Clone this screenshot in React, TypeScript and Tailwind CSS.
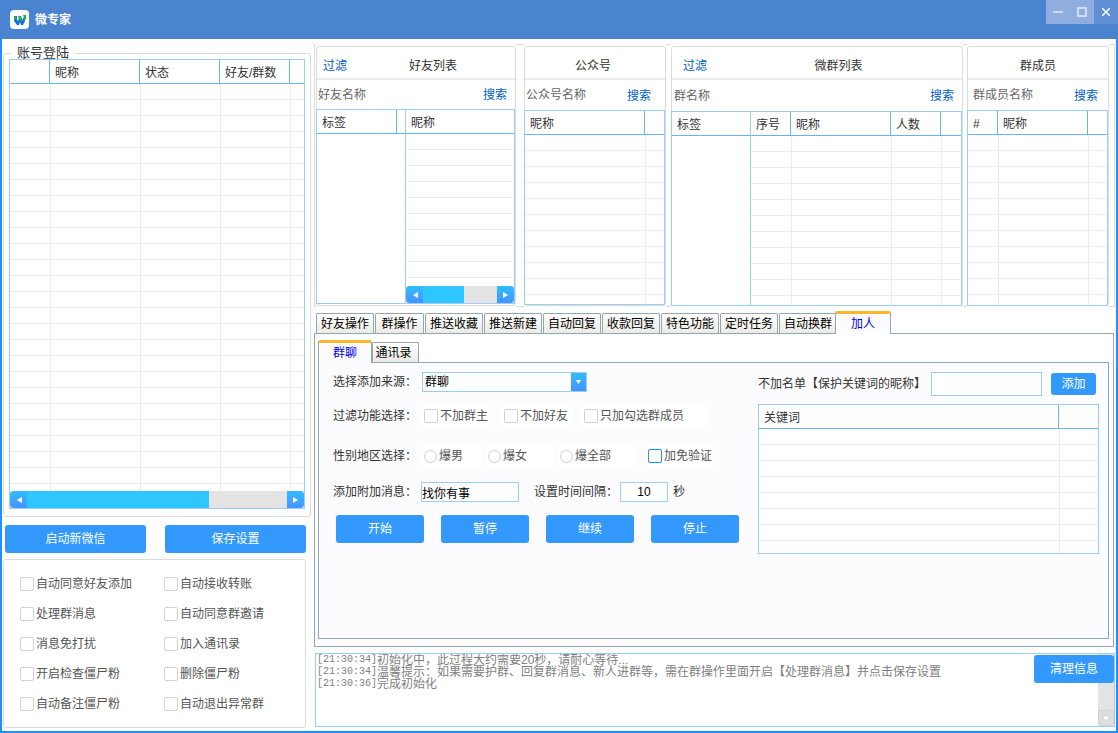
import { useState } from 'react';
import type { ReactNode } from 'react';

interface Column {
  label: string;
  // Tailwind width class; left empty for the column that takes the rest
  width?: string;
}

interface GridTableProps {
  columns: Column[];
  rows?: number;
  // Height class of the last, partly shown row
  tail: string;
  lines?: boolean;
}

const ACCOUNT_COLUMNS: Column[] = [
  { label: '', width: 'w-[40px]' },
  { label: '昵称' },
  { label: '状态', width: 'w-[80px]' },
  { label: '好友/群数', width: 'w-[70px]' },
  { label: '', width: 'w-[14px]' },
];

const SETTINGS = [
  '自动同意好友添加', '自动接收转账',
  '处理群消息', '自动同意群邀请',
  '消息免打扰', '加入通讯录',
  '开启检查僵尸粉', '删除僵尸粉',
  '自动备注僵尸粉', '自动退出异常群',
];

const TABS = ['好友操作', '群操作', '推送收藏', '推送新建', '自动回复', '收款回复', '特色功能', '定时任务', '自动换群', '加人'];

const ACTIONS = ['开始', '暂停', '继续', '停止'];

const LOG = [
  { time: '[21:30:34]', text: '初始化中，此过程大约需要20秒，请耐心等待...' },
  { time: '[21:30:34]', text: '温馨提示：如果需要护群、回复群消息、新人进群等，需在群操作里面开启【处理群消息】并点击保存设置' },
  { time: '[21:30:36]', text: '完成初始化' },
];

function GridTable({ columns, rows = 0, tail, lines = true }: GridTableProps) {
  const cell = lines ? 'border-[#ececec]' : 'border-transparent';
  return (
    <table className="w-full table-fixed border-separate border-spacing-0 bg-white">
      <thead>
        <tr className="h-6">
          {columns.map((c, i) => (
            <th
              key={i}
              className={`h-6 overflow-hidden border-b border-[#66b5ee] p-0 pt-0.5 text-left font-normal whitespace-nowrap text-[#333] ${c.width ?? ''} ${c.label ? 'pl-[5px]' : ''} ${i < columns.length - 1 ? 'border-r' : ''}`}
            >
              {c.label}
            </th>
          ))}
        </tr>
      </thead>
      <tbody>
        {Array.from({ length: rows }, (_, r) => (
          <tr key={r}>
            {columns.map((_, i) => (
              <td key={i} className={`h-4 border-b p-0 ${cell} ${i > 0 ? 'border-l' : ''}`} />
            ))}
          </tr>
        ))}
        <tr>
          {columns.map((_, i) => (
            <td key={i} className={`p-0 ${tail} ${cell} ${i > 0 ? 'border-l' : ''}`} />
          ))}
        </tr>
      </tbody>
    </table>
  );
}

function ScrollBar({ thumb }: { thumb: string }) {
  const end = 'flex h-[17px] w-[17px] shrink-0 items-center justify-center bg-linear-to-b from-[#2ebcff] to-[#4494ff]';
  return (
    <div className="flex h-[17px] bg-[#e3e3e3]">
      <button aria-label="向左" className={`${end} rounded-l-[4px]`}>
        <svg width="6" height="8" viewBox="0 0 6 8"><path d="M6 1v6L1 4z" fill="#fff" /></svg>
      </button>
      <div className="flex-1">
        <div className={`h-full bg-[#2fc5ff] ${thumb}`} />
      </div>
      <button aria-label="向右" className={`${end} rounded-r-[4px]`}>
        <svg width="6" height="8" viewBox="0 0 6 8"><path d="M0 1v6l5-3z" fill="#fff" /></svg>
      </button>
    </div>
  );
}

function Check({ label, active }: { label: string; active?: boolean }) {
  return (
    <label className="flex items-center gap-0.5 whitespace-nowrap text-[#555]">
      <input
        type="checkbox"
        className={`h-3.5 w-3.5 shrink-0 appearance-none rounded-[2px] border bg-white checked:bg-[#3399ff] ${active ? 'border-[#1e90ff]' : 'border-[#d2d2d2]'}`}
      />
      {label}
    </label>
  );
}

function Radio({ label }: { label: string }) {
  return (
    <label className="flex items-center gap-0.5 whitespace-nowrap text-[#555]">
      <input
        type="radio"
        name="gender"
        className="h-[13px] w-[13px] shrink-0 appearance-none rounded-full border border-[#d2d2d2] bg-white checked:bg-[#3399ff]"
      />
      {label}
    </label>
  );
}

interface PanelProps {
  title: string;
  search: string;
  filter?: string;
  // Classes for the panel, the title, the search row
  className: string;
  titleClass?: string;
  searchClass: string;
  children: ReactNode;
}

function Panel({ title, search, filter, className, titleClass = '', searchClass, children }: PanelProps) {
  return (
    <section className={`-my-px flex min-w-0 flex-col bg-white pt-[2px] pb-px ${className}`}>
      <div className="flex-1 rounded-[3px] border border-[#dcdcdc]">
        <div className="flex h-[33px] items-center border-b-2 border-[#ebebeb] pt-1.5">
          {filter && <button className={`text-[#0060c0] ${filter}`}>过滤</button>}
          <h2 className={`flex-1 text-center text-[#333] ${titleClass}`}>{title}</h2>
        </div>
        <div className={`flex items-center ${searchClass}`}>
          <input
            aria-label={search}
            placeholder={search}
            className="min-w-0 flex-1 bg-transparent p-0 outline-none placeholder:text-[#666]"
          />
          <button className="shrink-0 pt-px text-[#0060c0]">搜索</button>
        </div>
        <div className="-mb-px -ml-px flex border border-[#99cdfa]">{children}</div>
      </div>
    </section>
  );
}

interface TabProps {
  label: string;
  active: boolean;
  className: string;
  onClick: () => void;
}

function Tab({ label, active, className, onClick }: TabProps) {
  return (
    <button
      role="tab"
      aria-selected={active}
      onClick={onClick}
      className={`shrink-0 whitespace-nowrap ${className} ${
        active
          ? 'z-10 -mb-px h-[23px] rounded-t-[2px] border-x border-t-[3px] border-x-[#91a7b4] border-t-[#fbb62c] bg-[#fcfcfe] text-[#0000e6]'
          : 'h-5 rounded-t-[2px] border border-b-0 border-[#91a7b4] bg-linear-to-b from-white to-[#ebebe4] text-black'
      }`}
    >
      {label}
    </button>
  );
}

function TitleBar() {
  return (
    <header className="flex h-[39px] shrink-0 items-center bg-[#4a83d0] pl-2.5">
      <svg width="19" height="19" viewBox="0 0 19 19">
        <rect width="19" height="19" rx="4" fill="#fff" />
        <path d="M4 6h3v4l1 1 1-3h2l1 3 1-3h2v3l-2 4h-2l-1-3-1 3H7L4 11z" fill="#1269d8" />
        <path d="M4 6h2v2l1 2H5L4 8zM8 6h3l1 3v3h-1l-2-3zM13 5h3v4l-2 2v-3z" fill="#16b05a" />
      </svg>
      <h1 className="ml-1.5 flex-1 text-[12px] font-bold text-white">微专家</h1>
      <div className="flex self-start">
        <button aria-label="最小化" className="flex h-6 w-6 items-center justify-center bg-[#8faddf]">
          <svg width="10" height="10"><path d="M0 5h10" stroke="#cfdcf2" strokeWidth="2" /></svg>
        </button>
        <button aria-label="最大化" className="flex h-6 w-6 items-center justify-center bg-[#8faddf]">
          <svg width="10" height="10"><rect x="1" y="1" width="8" height="8" fill="none" stroke="#cfdcf2" strokeWidth="2" /></svg>
        </button>
        <button aria-label="关闭" className="flex h-6 w-6 items-center justify-center bg-[#608fd5]">
          <svg width="8" height="8"><path d="M0 0l8 8M8 0L0 8" stroke="#fff" strokeWidth="1.500" /></svg>
        </button>
      </div>
    </header>
  );
}

function AccountColumn() {
  const button = 'h-7 flex-1 rounded-[3px] bg-[#3399ff] text-white';
  return (
    <aside className="flex w-[309px] shrink-0 flex-col pt-[7px] pl-px">
      <fieldset className="min-w-0 rounded-[3px] border border-[#dcdcdc] px-[5px] pb-[7px]">
        <legend className="ml-0.5 px-1.5 text-[13px] leading-[14px] text-[#333]">账号登陆</legend>
        <div className="-mt-px border border-[#99cdfa]">
          <GridTable columns={ACCOUNT_COLUMNS} rows={25} tail="h-[7px]" />
          <ScrollBar thumb="w-[70%]" />
        </div>
      </fieldset>
      <div className="mt-2 mr-[5px] ml-0.5 flex gap-[19px]">
        <button className={button}>启动新微信</button>
        <button className={button}>保存设置</button>
      </div>
      <div className="mt-1.5 mr-[5px] grid grid-cols-[144fr_141fr] rounded-[3px] border border-[#dcdcdc] pt-[9px] pb-2 pl-4">
        {SETTINGS.map((s) => (
          <div key={s} className="flex h-[30px] items-center">
            <Check label={s} />
          </div>
        ))}
      </div>
    </aside>
  );
}

function Lists() {
  return (
    <div className="flex border border-[#dcdcdc] pr-[5px] pl-px">
      <Panel title="好友列表" search="好友名称" filter="ml-1.5" titleClass="pl-1" className="flex-[200]" searchClass="h-[29px] pr-2 pl-px">
        <div className="w-[89px] shrink-0 border-r border-[#99cdfa]">
          <GridTable columns={[{ label: '标签', width: 'w-[80px]' }, { label: '' }]} tail="h-[169px]" lines={false} />
        </div>
        <div className="min-w-0 flex-1">
          <GridTable columns={[{ label: '昵称' }]} rows={9} tail="h-[8px]" />
          <ScrollBar thumb="w-[56%]" />
        </div>
      </Panel>
      <Panel title="公众号" search="公众号名称" titleClass="pr-1" className="ml-2 flex-[142]" searchClass="h-[30px] pr-3.5 pl-px">
        <GridTable columns={[{ label: '昵称' }, { label: '', width: 'w-[19px]' }]} rows={10} tail="h-[9px]" />
      </Panel>
      <Panel title="微群列表" search="群名称" filter="ml-[11px]" titleClass="pl-2" className="ml-[5px] flex-[292]" searchClass="h-[31px] pr-2 pl-0.5">
        <div className="w-[79px] shrink-0 border-r border-[#99cdfa]">
          <GridTable columns={[{ label: '标签' }]} tail="h-[169px]" lines={false} />
        </div>
        <div className="min-w-0 flex-1">
          <GridTable
            columns={[
              { label: '序号', width: 'w-[40px]' },
              { label: '昵称' },
              { label: '人数', width: 'w-[50px]' },
              { label: '', width: 'w-[20px]' },
            ]}
            rows={10}
            tail="h-[9px]"
          />
        </div>
      </Panel>
      <Panel title="群成员" search="群成员名称" className="ml-1 flex-[142]" searchClass="h-[30px] pr-2.5 pl-[5px]">
        <GridTable
          columns={[{ label: '#', width: 'w-[30px]' }, { label: '昵称' }, { label: '', width: 'w-[19px]' }]}
          rows={10}
          tail="h-[10px]"
        />
      </Panel>
    </div>
  );
}

function AddForm() {
  const field = 'border border-[#99cdfa] bg-white text-black outline-none';
  const item = 'flex h-6 items-center bg-white pl-0.5';
  const label = 'w-[89px] shrink-0 whitespace-nowrap';
  return (
    <div className="flex min-w-0 flex-col text-[#333]">
      <div className="flex h-5 items-center">
        <label htmlFor="source" className={label}>选择添加来源：</label>
        <div className="relative w-[165px]">
          <select id="source" className={`block h-5 w-full appearance-none pl-0.5 ${field}`}>
            <option>群聊</option>
            <option>通讯录</option>
          </select>
          <span className="pointer-events-none absolute top-px right-px flex h-[18px] w-[15px] items-center justify-center bg-linear-to-b from-[#2ebcff] to-[#4494ff]">
            <svg width="5" height="4" viewBox="0 0 5 4"><path d="M0 0h5L2.500 4z" fill="#fff" /></svg>
          </span>
        </div>
      </div>
      <div className="mt-3 flex items-center">
        <span className={label}>过滤功能选择：</span>
        <div className="flex gap-2">
          <div className={`w-[72px] ${item}`}><Check label="不加群主" /></div>
          <div className={`w-[72px] ${item}`}><Check label="不加好友" /></div>
          <div className={`w-[125px] ${item}`}><Check label="只加勾选群成员" /></div>
        </div>
      </div>
      <div className="mt-4 flex items-center">
        <span className={label}>性别地区选择：</span>
        <div className={`w-[60px] ${item}`}><Radio label="爆男" /></div>
        <div className={`ml-1 w-[68px] ${item}`}><Radio label="爆女" /></div>
        <div className={`ml-1 w-[76px] ${item}`}><Radio label="爆全部" /></div>
        <div className={`ml-3 w-[72px] ${item}`}><Check label="加免验证" active /></div>
      </div>
      <div className="mt-3.5 flex h-5 items-center">
        <label htmlFor="message" className="w-[88px] shrink-0 whitespace-nowrap">添加附加消息：</label>
        <input id="message" defaultValue="找你有事" className={`h-5 w-[98px] p-0 ${field}`} />
        <label htmlFor="interval" className="ml-[15px] w-[86px] shrink-0 whitespace-nowrap">设置时间间隔：</label>
        <input id="interval" defaultValue="10" className={`h-5 w-12 p-0 text-center ${field}`} />
        <span className="ml-[5px]">秒</span>
      </div>
      <div className="mt-[13px] ml-[3px] flex gap-[17px]">
        {ACTIONS.map((a) => (
          <button key={a} className="h-7 w-[88px] rounded-[3px] bg-[#3399ff] text-white">{a}</button>
        ))}
      </div>
    </div>
  );
}

function KeywordList() {
  return (
    <div className="min-w-0 text-[#333]">
      <div className="flex h-6 items-center">
        <label htmlFor="keyword" className="flex-1 whitespace-nowrap">不加名单【保护关键词的昵称】</label>
        <input id="keyword" className="h-6 w-[111px] border border-[#99cdfa] bg-white px-1 outline-none" />
        <button className="mr-[3px] ml-[9px] h-[22px] w-[45px] rounded-[3px] bg-[#3399ff] text-white">添加</button>
      </div>
      <div className="mt-2 border border-[#99cdfa]">
        <GridTable columns={[{ label: '关键词' }, { label: '', width: 'w-[39px]' }]} rows={7} tail="h-[12px]" />
      </div>
    </div>
  );
}

function Log() {
  return (
    <div className="relative mt-1.5 ml-px flex h-[74px] border border-[#99cdfa] bg-white">
      <div role="log" className="min-w-0 flex-1 overflow-hidden pl-px leading-[12px] text-[#808080]">
        {LOG.map((line, i) => (
          <p key={i} className="flex h-3 items-center whitespace-nowrap">
            <span className="font-['Liberation_Mono',monospace] text-[10px]">{line.time}</span>
            <span>{line.text}</span>
          </p>
        ))}
      </div>
      <div className="flex w-4 flex-col justify-end bg-[#e3e3e3]">
        <button aria-label="向下" className="flex h-4 items-center justify-center rounded-b-[4px] border border-[#d4d4d4] bg-[#dedede]">
          <svg width="8" height="6" viewBox="0 0 8 6"><path d="M1 1h6v2L4 5.500 1 3z" fill="#fff" stroke="#bbb" strokeWidth=".5" /></svg>
        </button>
      </div>
      <button className="absolute top-px right-0 h-7 w-20 rounded-[3px] bg-[#3399ff] text-white">清理信息</button>
    </div>
  );
}

export default function App() {
  const [tab, setTab] = useState('加人');
  const [source, setSource] = useState('群聊');

  return (
    <div className="flex min-h-screen flex-col bg-white font-['Liberation_Sans','Noto_Sans_CJK_SC',sans-serif] text-[12px] leading-[16px]">
      <TitleBar />
      <div className="flex flex-1 border-x-2 border-b-2 border-[#1e90ff]">
        <AccountColumn />
        <main className="ml-[3px] flex min-w-0 flex-1 flex-col pt-[5px] pr-px pb-1">
          <Lists />
          <div role="tablist" className="flex h-[26px] shrink-0 items-end gap-px pl-0.5">
            {TABS.map((t) => (
              <Tab
                key={t}
                label={t}
                active={t === tab}
                onClick={() => setTab(t)}
                className={t === '群操作' ? 'w-[49px]' : t === '加人' ? '-ml-[3px] w-[56px]' : 'w-[58px]'}
              />
            ))}
          </div>
          <div className="mr-px flex flex-1 flex-col border border-[#91a7b4] bg-[#fcfcfe] pr-1 pb-[7px] pl-[3px]">
            <div role="tablist" className="-mr-1 flex h-7 items-end bg-white">
              <Tab label="群聊" active={source === '群聊'} onClick={() => setSource('群聊')} className="w-[54px]" />
              <Tab label="通讯录" active={source === '通讯录'} onClick={() => setSource('通讯录')} className="w-[47px] pr-1" />
            </div>
            <div className="grid flex-1 grid-cols-[425fr_341fr] content-start border border-[#91a7b4] pt-[9px] pr-[9px] pl-3.5">
              <AddForm />
              <KeywordList />
            </div>
          </div>
          <Log />
        </main>
      </div>
    </div>
  );
}
